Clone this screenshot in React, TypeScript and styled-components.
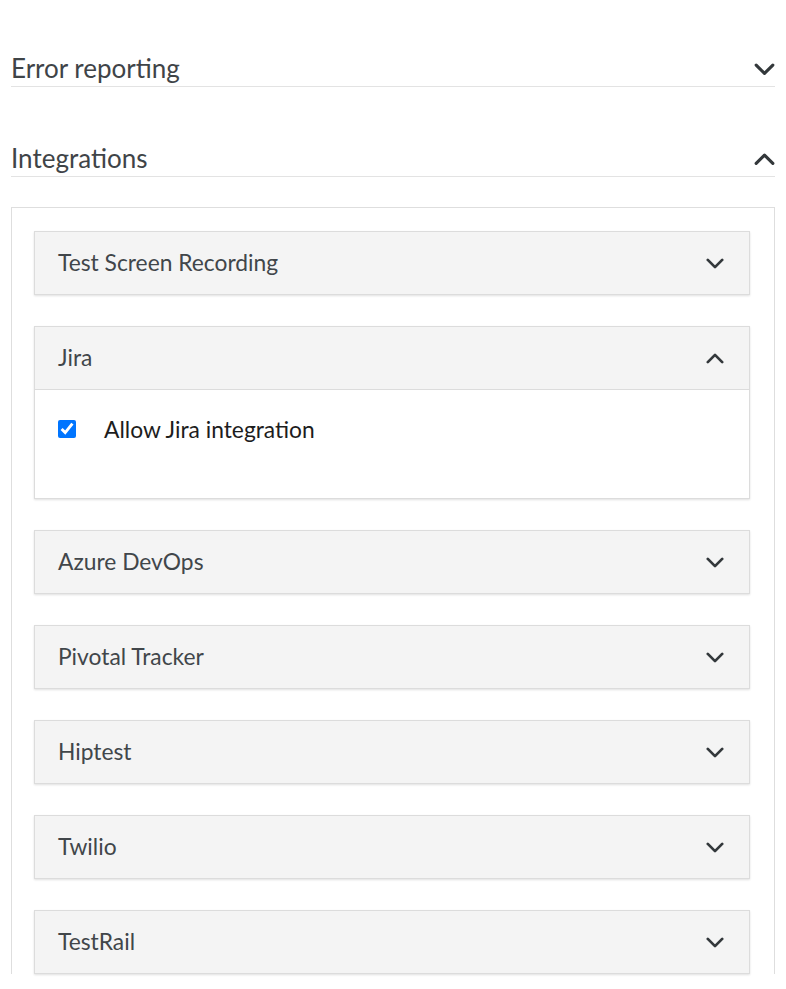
import { useState } from 'react';
import styled, { createGlobalStyle } from 'styled-components';

const GlobalStyle = createGlobalStyle`
  body {
    margin: 0;
    background: #ffffff;
    font-family: Lato, "Open Sans", "Liberation Sans", sans-serif;
  }
`;

const Page = styled.div`
  padding: 53px 11px 0 11px;
`;

const SectionHeader = styled.div<{ gapTop?: number }>`
  display: flex;
  align-items: center;
  justify-content: space-between;
  height: 33px;
  margin-top: ${props => props.gapTop ?? 0}px;
  border-bottom: 1px solid #e3e3e3;
  cursor: pointer;
`;

const SectionTitle = styled.span`
  font-size: 26px;
  color: #3f4448;
  line-height: 33px;
  padding-bottom: 2px;
`;

const Chevron = styled.svg<{ size: number }>`
  width: ${props => props.size}px;
  height: ${props => props.size / 2 + 2}px;
  flex: none;
`;

const IntegrationsBox = styled.div`
  margin-top: 30px;
  border: 1px solid #dedede;
  border-bottom: none;
  padding: 23px 24px 0 22px;
`;

const Panel = styled.div`
  border: 1px solid #dcdcdc;
  box-shadow: 0 1px 2px rgba(0, 0, 0, 0.12);
  margin-bottom: 31px;
  background: #ffffff;
`;

const PanelHeader = styled.div<{ open: boolean }>`
  display: flex;
  align-items: center;
  justify-content: space-between;
  height: 62px;
  padding: 0 25px 0 23px;
  background: #f4f4f4;
  border-bottom: ${props => (props.open ? '1px solid #dcdcdc' : 'none')};
  cursor: pointer;
`;

const PanelTitle = styled.span`
  font-size: 22.8px;
  color: #41464a;
  padding-bottom: 3px;
`;

const PanelBody = styled.div`
  height: 108px;
  box-sizing: border-box;
  padding: 25px 23px 0 23px;
`;

const CheckRow = styled.label`
  display: flex;
  align-items: center;
  gap: 28px;
  font-size: 22.8px;
  color: #1d1d1d;
`;

const CheckBox = styled.input`
  width: 18px;
  height: 18px;
  margin: 0;
  accent-color: #0075ff;
`;

const ChevronIcon = ({ up, size }: { up: boolean; size: number }) => (
  <Chevron size={size} viewBox="0 0 20 12">
    <polyline
      points={up ? '2,10 10,2 18,10' : '2,2 10,10 18,2'}
      fill="none"
      stroke="#33383b"
      strokeWidth="3"
      strokeLinecap="round"
      strokeLinejoin="round"
    />
  </Chevron>
);

const integrations = [
  'Test Screen Recording',
  'Jira',
  'Azure DevOps',
  'Pivotal Tracker',
  'Hiptest',
  'Twilio',
  'TestRail',
];

const App = () => {
  const [openPanel, setOpenPanel] = useState('Jira');
  const [allowJira, setAllowJira] = useState(true);

  return (
    <Page>
      <GlobalStyle />
      <SectionHeader>
        <SectionTitle>Error reporting</SectionTitle>
        <ChevronIcon up={false} size={21} />
      </SectionHeader>

      <SectionHeader gapTop={56}>
        <SectionTitle>Integrations</SectionTitle>
        <ChevronIcon up size={21} />
      </SectionHeader>

      <IntegrationsBox>
        {integrations.map(name => {
          const open = openPanel === name;
          return (
            <Panel key={name}>
              <PanelHeader open={open} onClick={() => setOpenPanel(open ? '' : name)}>
                <PanelTitle>{name}</PanelTitle>
                <ChevronIcon up={open} size={18} />
              </PanelHeader>
              {open && name === 'Jira' && (
                <PanelBody>
                  <CheckRow>
                    <CheckBox
                      type="checkbox"
                      checked={allowJira}
                      onChange={e => setAllowJira(e.target.checked)}
                    />
                    Allow Jira integration
                  </CheckRow>
                </PanelBody>
              )}
            </Panel>
          );
        })}
      </IntegrationsBox>
    </Page>
  );
};

export default App;
